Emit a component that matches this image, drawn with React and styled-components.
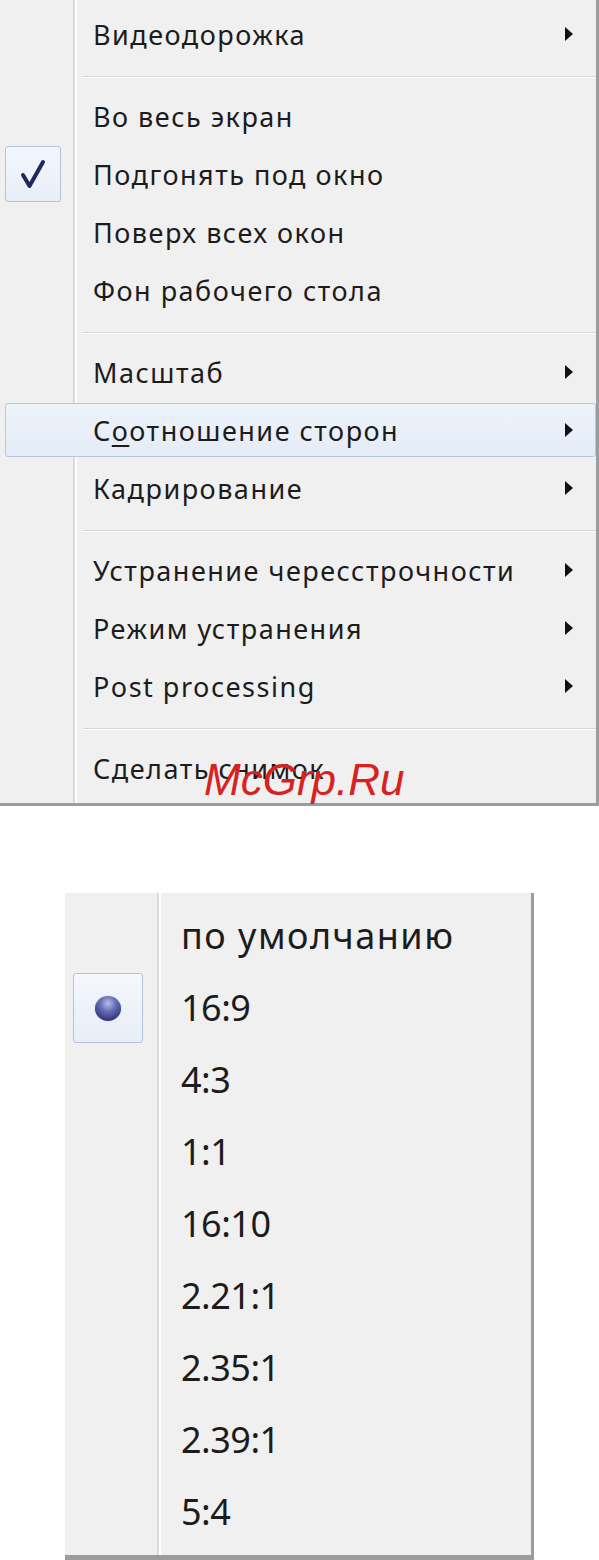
import React from "react";
import styled, { createGlobalStyle } from "styled-components";

const GlobalStyle = createGlobalStyle`
  body {
    margin: 0;
    background: #ffffff;
    font-family: "Noto Sans", "Open Sans", sans-serif;
  }
`;

const Page = styled.div`
  width: 599px;
  height: 1560px;
  display: flex;
  flex-direction: column;
  overflow: hidden;
`;

const Menu = styled.div`
  position: relative;
  box-sizing: border-box;
  width: ${(p) => p.$width}px;
  margin-left: ${(p) => p.$left || 0}px;
  margin-top: ${(p) => p.$top || 0}px;
  padding: ${(p) => p.$pad};
  display: flex;
  flex-direction: column;
  background-color: #f0f0f0;
  background-image: linear-gradient(
    to right,
    transparent ${(p) => p.$gutter}px,
    #dadada ${(p) => p.$gutter}px,
    #dadada ${(p) => p.$gutter + 2}px,
    #ffffff ${(p) => p.$gutter + 2}px,
    #ffffff ${(p) => p.$gutter + 4}px,
    transparent ${(p) => p.$gutter + 4}px
  );
  border-right: 3px solid #9c9c9c;
  border-bottom: ${(p) => p.$bottom}px solid #9c9c9c;
  color: #1c1c1c;
`;

const Row = styled.div`
  height: ${(p) => p.$h}px;
  display: flex;
  align-items: center;
`;

const Item = styled.div`
  box-sizing: border-box;
  flex: 1;
  height: ${(p) => p.$h}px;
  margin-left: ${(p) => p.$inset}px;
  display: flex;
  align-items: center;
  border: 1px solid ${(p) => (p.$active ? "#b4c8e2" : "transparent")};
  border-radius: 3px;
  background: ${(p) =>
    p.$active ? "linear-gradient(to bottom, #eef3fa, #e4ecf7)" : "transparent"};
`;

const IconBox = styled.div`
  box-sizing: border-box;
  flex: none;
  width: ${(p) => p.$size}px;
  height: ${(p) => p.$size}px;
  margin-left: -1px;
  display: flex;
  align-items: center;
  justify-content: center;
  border: 1px solid ${(p) => (p.$on ? "#b5c3d8" : "transparent")};
  border-radius: 3px;
  background: ${(p) =>
    p.$on ? "linear-gradient(to bottom, #f4f7fc, #e8eef8)" : "transparent"};
`;

const Label = styled.span`
  flex: 1;
  margin-left: ${(p) => p.$gap}px;
  font-size: ${(p) => p.$size}px;
  line-height: 1;
  white-space: nowrap;
  letter-spacing: ${(p) => p.$ls || 0}px;

  u {
    text-decoration-thickness: 2px;
    text-underline-offset: 4px;
  }
`;

const Arrow = styled.span`
  flex: none;
  width: 0;
  height: 0;
  margin-right: 22px;
  border-top: 7px solid transparent;
  border-bottom: 7px solid transparent;
  border-left: 8px solid #111;
`;

const Separator = styled.div`
  height: 24px;
  margin-left: 83px;

  &::before {
    content: "";
    display: block;
    margin-top: 13px;
    border-top: 1px solid #d5d5d5;
    border-bottom: 1px solid #ffffff;
  }
`;

const Bullet = styled.span`
  width: 26px;
  height: 25px;
  border-radius: 50%;
  background: radial-gradient(
    circle at 50% 30%,
    #b8bce8 0%,
    #6a70b8 35%,
    #2e3478 80%,
    #252a63 100%
  );
  box-shadow: 0 0 1px rgba(30, 35, 90, 0.6);
`;

const Watermark = styled.div`
  position: absolute;
  left: 204px;
  top: 758px;
  font-family: "Liberation Sans", Arial, sans-serif;
  font-style: italic;
  font-size: 44px;
  line-height: 44px;
  color: #d9221f;
  pointer-events: none;
`;

const Check = () => (
  <svg width="26" height="30" viewBox="0 0 26 30">
    <path
      d="M3 16 L9.5 27 L23 3"
      fill="none"
      stroke="#1f2a5c"
      strokeWidth="4"
      strokeLinecap="round"
      strokeLinejoin="round"
    />
  </svg>
);

const mainMenu = [
  [{ label: "Видеодорожка", sub: true }],
  [
    { label: "Во весь экран" },
    { label: "Подгонять под окно", checked: true },
    { label: "Поверх всех окон" },
    { label: "Фон рабочего стола" },
  ],
  [
    { label: "Масштаб", sub: true },
    { label: "Соотношение сторон", sub: true, active: true },
    { label: "Кадрирование", sub: true },
  ],
  [
    { label: "Устранение чересстрочности", sub: true },
    { label: "Режим устранения", sub: true },
    { label: "Post processing", sub: true },
  ],
  [{ label: "Сделать снимок" }],
];

const ratios = [
  "по умолчанию",
  "16:9",
  "4:3",
  "1:1",
  "16:10",
  "2.21:1",
  "2.35:1",
  "2.39:1",
  "5:4",
];

function renderLabel(text) {
  if (text === "Соотношение сторон") {
    return (
      <>
        С<u>о</u>отношение сторон
      </>
    );
  }
  return text;
}

export default function App() {
  return (
    <Page>
      <GlobalStyle />
      <Menu $width={599} $pad="5px 0 6px" $gutter={73} $bottom={3}>
        {mainMenu.map((group, gi) => (
          <React.Fragment key={gi}>
            {gi > 0 && <Separator />}
            {group.map((it) => (
              <Row key={it.label} $h={58}>
                <Item $h={it.active ? 54 : 56} $inset={5} $active={it.active}>
                  <IconBox $size={56} $on={it.checked}>
                    {it.checked && <Check />}
                  </IconBox>
                  <Label $gap={32} $size={27} $ls={1.5}>
                    {renderLabel(it.label)}
                  </Label>
                  {it.sub && <Arrow />}
                </Item>
              </Row>
            ))}
          </React.Fragment>
        ))}
        <Watermark>McGrp.Ru</Watermark>
      </Menu>

      <Menu
        $width={469}
        $left={65}
        $top={87}
        $pad="7px 0 7px"
        $gutter={92}
        $bottom={5}
      >
        {ratios.map((r, i) => (
          <Row key={r} $h={72}>
            <Item $h={70} $inset={8}>
              <IconBox $size={70} $on={i === 1}>
                {i === 1 && <Bullet />}
              </IconBox>
              <Label $gap={38} $size={36} $ls={/\d/.test(r) ? -0.5 : 1.5}>
                {r}
              </Label>
            </Item>
          </Row>
        ))}
      </Menu>
    </Page>
  );
}
